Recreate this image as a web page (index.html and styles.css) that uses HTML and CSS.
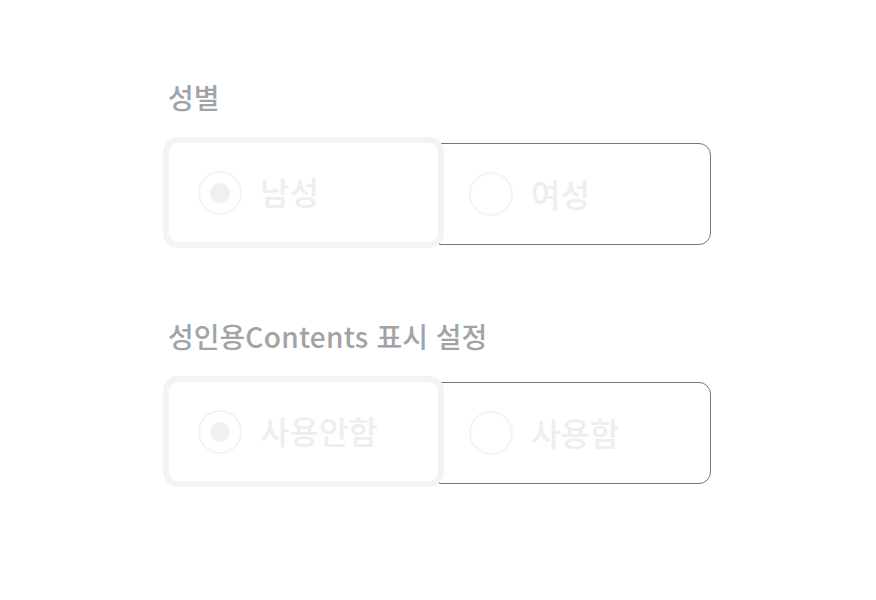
FILE: index.html
```html
<!DOCTYPE html>
<html lang="ko">
<head>
    <meta charset="UTF-8">
    <meta name="viewport" content="width=device-width, initial-scale=1.0">
    <title>설정</title>
    <link rel="stylesheet" href="styles.css">
</head>
<body>
    <div class="settings">
        <!-- 성별 -->
        <div class="field">
            <h3 class="field-title">성별</h3>
            <div class="radio-group">
                <label class="radio-item checked">
                    <span class="radio-dot"></span>
                    <span class="radio-text">남성</span>
                </label>
                <label class="radio-item">
                    <span class="radio-dot"></span>
                    <span class="radio-text">여성</span>
                </label>
            </div>
        </div>

        <!-- 성인용 컨텐츠 -->
        <div class="field">
            <h3 class="field-title">성인용<span class="latin">Contents</span> 표시 설정</h3>
            <div class="radio-group">
                <label class="radio-item checked">
                    <span class="radio-dot"></span>
                    <span class="radio-text">사용안함</span>
                </label>
                <label class="radio-item">
                    <span class="radio-dot"></span>
                    <span class="radio-text">사용함</span>
                </label>
            </div>
        </div>
    </div>
</body>
</html>
```

FILE: styles.css
```css
* {
    margin: 0;
    padding: 0;
    box-sizing: border-box;
}

body {
    font-family: "Noto Sans CJK KR", "Noto Sans", sans-serif;
    background-color: #fff;
    color: #333;
}

.settings {
    width: 543px;
    margin-left: 168px;
    padding-top: 77px;
}

.field {
    margin-bottom: 71px;
}

.field-title {
    font-size: 28px;
    font-weight: 500;
    line-height: 40px;
    color: #a3a3a3;
    margin-bottom: 26px;
}

.field-title .latin {
    letter-spacing: 0.3px;
}

.radio-group {
    display: grid;
    grid-template-columns: 271px 272px;
}

.radio-item {
    display: flex;
    align-items: center;
    gap: 18px;
    height: 102px;
    padding-left: 29px;
    border: 1px solid #777;
    border-radius: 0 12px 12px 0;
    background-color: #fff;
}

.radio-item.checked {
    position: relative;
    z-index: 1;
    height: 101px;
    margin-top: -1px;
    border: 1px solid #f3f3f3;
    border-radius: 10px;
    box-shadow: 0 0 0 5px #f3f3f3;
}

.radio-dot {
    width: 44px;
    height: 44px;
    border: 2px solid #f4f4f4;
    border-radius: 50%;
    display: flex;
    align-items: center;
    justify-content: center;
}

.radio-item.checked .radio-dot::after {
    content: "";
    width: 20px;
    height: 20px;
    border-radius: 50%;
    background-color: #f0f0f0;
}

.radio-text {
    font-size: 32px;
    font-weight: 500;
    line-height: 40px;
    margin-top: -3px;
    color: #eeeeee;
}
```
